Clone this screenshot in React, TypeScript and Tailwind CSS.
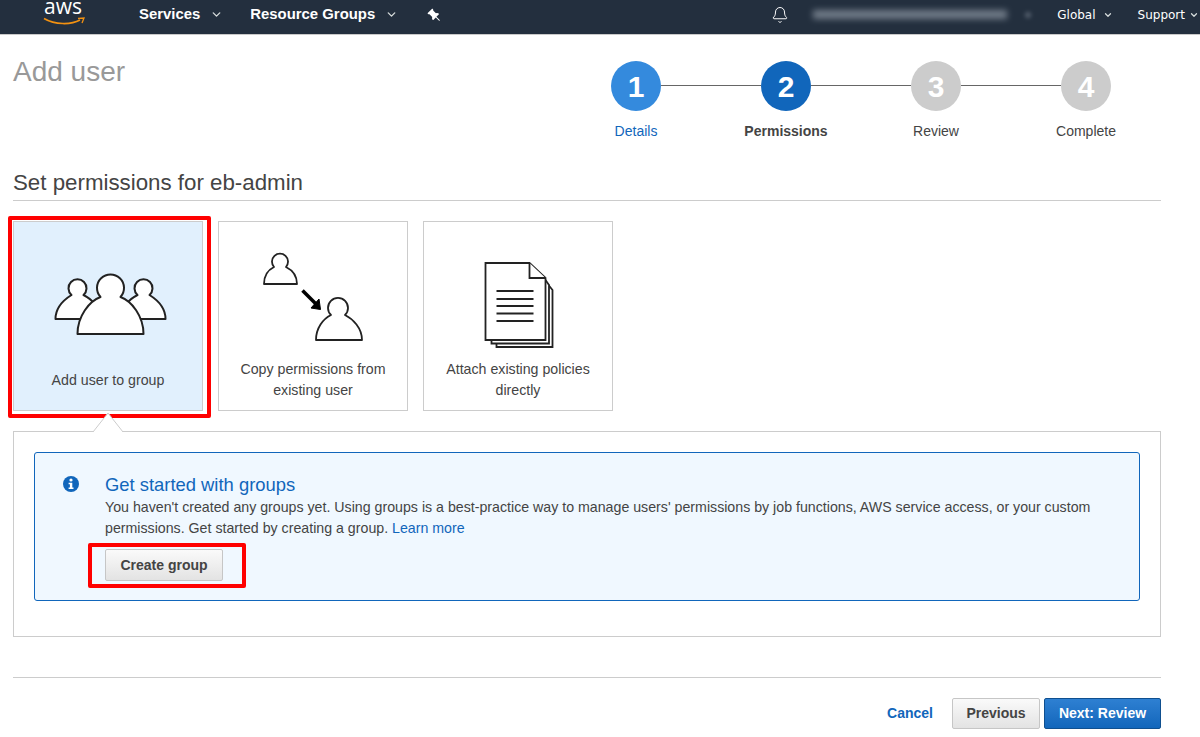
import type { ReactNode } from "react";
import { Bell, ChevronDown } from "lucide-react";
import { BsPinAngleFill } from "react-icons/bs";

const steps = [
  { n: 1, label: "Details", circle: "bg-[#348add]", text: "text-[#1166bb]" },
  { n: 2, label: "Permissions", circle: "bg-[#1166bb]", text: "text-[#444444] font-bold" },
  { n: 3, label: "Review", circle: "bg-[#cccccc]", text: "text-[#444444]" },
  { n: 4, label: "Complete", circle: "bg-[#cccccc]", text: "text-[#444444]" },
];

const GroupIcon = () => (
  <svg width="120" height="70" viewBox="48.5 270 120 70" fill="#ffffff" stroke="#222222" strokeWidth="2" strokeLinejoin="round">
    <path d="M56 319 C56 307 64 300 72 295 A9 9 0 1 1 84 295 C92 299 100 307 100 319 Z" />
    <path d="M166 319 C166 307 158 300 150 295 A9 9 0 1 0 138 295 C130 299 122 307 122 319 Z" />
    <path d="M78 334 C78 316 90 301 101 297 A13.5 13.5 0 1 1 121 297 C132 301 144 316 144 334 Z" />
  </svg>
);

const CopyIcon = () => (
  <svg width="105" height="95" viewBox="261 250 105 95" fill="#ffffff" stroke="#222222" strokeWidth="1.8" strokeLinejoin="round">
    <path d="M264 284 C264 275 268 270 274 267 A8 8 0 1 1 286 267 C292 270 297 275 297 284 Z" />
    <path d="M316 340 C316 328 323 319 331 315 A10 10 0 1 1 345 315 C353 319 362 328 362 340 Z" />
    <path d="M302.5 290.5 L316 304" stroke="#000000" strokeWidth="3.5" fill="none" />
    <path d="M320.5 309.5 L319 299 L311 308 Z" fill="#000000" stroke="#000000" strokeWidth="1" />
  </svg>
);

const DocsIcon = () => (
  <svg width="72" height="88" viewBox="482.5 261 72 88" fill="#ffffff" stroke="#222222" strokeWidth="1.8" strokeLinejoin="miter">
    <path d="M549 285 L553 290 V347 H497 V343 H549" />
    <path d="M546 280 L549.5 285 V343.5 H492 V340 H546" />
    <path d="M486 263 H530 L546 278 V340 H486 Z" />
    <path d="M530 263 V278 H546" />
    <path d="M497 291 H534 M497 299 H534 M497 306 H534 M497 313.5 H534 M497 321 H534" fill="none" />
  </svg>
);

const Card = ({ active, children }: { active?: boolean; children: ReactNode }) => (
  <div
    className={
      active
        ? "relative w-[190px] h-[190px] border border-[#cccccc] bg-[#e1f0fd] flex flex-col items-center text-[14.2px]"
        : "relative w-[190px] h-[190px] border border-[#cccccc] bg-white flex flex-col items-center text-[14.2px]"
    }
  >
    {children}
  </div>
);

export default function App() {
  return (
    <div className="w-[1200px] h-[737px] overflow-hidden bg-white text-[14px] text-[#444444] font-['Liberation_Sans',Arial,sans-serif]">
      {/* top nav */}
      <nav className="h-[35px] bg-[#232f3e] border-b border-[#c9c9c9] flex items-center text-white pb-[5px]">
        <div className="w-[139px] pl-[43px] flex flex-col items-start self-start h-[34px]">
          <span className="text-[21px] leading-[12px] ml-[1px] font-['Open_Sans',sans-serif]">aws</span>
          <svg width="42" height="9" viewBox="0 0 42 9" className="mt-[5px]">
            <path d="M1 1.5 C12 8 28 8 37 3" fill="none" stroke="#f29111" strokeWidth="1.6" />
            <path d="M35 1.5 L41 1 L39 6" fill="none" stroke="#f29111" strokeWidth="1.3" />
          </svg>
        </div>
        <span className="font-bold text-[14.9px]">Services</span>
        <ChevronDown size={13} strokeWidth={2.5} className="ml-[10px] text-[#d5dbdb]" />
        <span className="font-bold text-[14.9px] ml-[27px]">Resource Groups</span>
        <ChevronDown size={13} strokeWidth={2.5} className="ml-[10px] text-[#d5dbdb]" />
        <BsPinAngleFill size={14} className="ml-[29px] -scale-x-100" />
        <div className="ml-auto flex items-center font-['DejaVu_Sans',sans-serif] text-[12px]">
          <Bell size={18} strokeWidth={1.3} />
          <div className="ml-[24px] w-[194px] h-[9px] bg-[#8a94a0] blur-[3px] opacity-75" />
          <div className="ml-[18px] w-[6px] h-[6px] rounded-full bg-[#8a94a0] blur-[2px] opacity-50" />
          <div className="ml-[26px]">Global</div>
          <ChevronDown size={10} strokeWidth={3} className="ml-[7px] text-[#d5dbdb]" />
          <div className="ml-[25px]">Support</div>
          <ChevronDown size={10} strokeWidth={3} className="ml-[4px] mr-[1px] text-[#d5dbdb]" />
        </div>
      </nav>

      <main className="pl-[13px] pr-[39px]">
        {/* title and wizard steps */}
        <div className="flex justify-between">
          <h1 className="mt-[19px] text-[28px] leading-[36px] text-[#999999]">Add user</h1>
          <div className="w-[600px] pt-[26px]">
            <div className="flex items-center px-[50px]">
              {steps.map((s, i) => (
                <div key={s.n} className={i < 3 ? "flex items-center flex-1" : "flex items-center"}>
                  <div className={"w-[50px] h-[50px] rounded-full flex items-center justify-center text-white font-bold text-[30px] " + s.circle}>
                    {s.n}
                  </div>
                  {i < 3 && <div className="flex-1 h-px bg-[#666666] -mt-[2px]" />}
                </div>
              ))}
            </div>
            <div className="grid grid-cols-4 mt-[10px] text-center leading-[20px]">
              {steps.map((s) => (
                <div key={s.n} className={s.text}>{s.label}</div>
              ))}
            </div>
          </div>
        </div>

        <h2 className="mt-[29px] text-[22.3px] leading-[26px] text-[#444444] border-b border-[#cccccc] pb-[4px]">
          Set permissions for eb-admin
        </h2>

        {/* permission option cards */}
        <div className="flex gap-[15px] mt-[20px]">
          <Card active>
            <div className="mt-[48px]"><GroupIcon /></div>
            <div className="mt-[30px] leading-[21px]">Add user to group</div>
            <div className="absolute -left-[6px] -right-[9px] -top-[6px] -bottom-[8px] border-[4px] border-[#ff0000] rounded-[2px]" />
          </Card>
          <Card>
            <div className="mt-[28px]"><CopyIcon /></div>
            <div className="mt-[14px] leading-[21px] text-center">Copy permissions from<br />existing user</div>
          </Card>
          <Card>
            <div className="mt-[39px]"><DocsIcon /></div>
            <div className="mt-[10px] leading-[21px] text-center">Attach existing policies<br />directly</div>
          </Card>
        </div>

        {/* panel with caret */}
        <div className="relative mt-[20px] h-[206px] border border-[#cccccc] p-[20px]">
          <svg width="32" height="20" viewBox="0 0 32 20" className="absolute left-[78px] -top-[20px]">
            <path d="M1 20 L16 1 L31 20" fill="#ffffff" stroke="#cccccc" strokeWidth="1" />
          </svg>
          <div className="h-[149px] border border-[#1166bb] rounded-[3px] bg-[#f0f8ff] flex pl-[28px]">
            <svg width="16" height="16" viewBox="0 0 16 16" className="mt-[23px] shrink-0">
              <circle cx="8" cy="8" r="8" fill="#1166bb" />
              <circle cx="8" cy="4" r="1.6" fill="#ffffff" />
              <path d="M5.6 6.8 H9.3 V11.6 H10.5 V13 H5.6 V11.6 H6.9 V8.2 H5.6 Z" fill="#ffffff" />
            </svg>
            <div className="ml-[26px] pt-[21px]">
              <h3 className="text-[18.4px] leading-[22px] text-[#1166bb]">Get started with groups</h3>
              <p className="text-[14.2px] leading-[21px] mt-[1px] w-[1010px]">
                You haven't created any groups yet. Using groups is a best-practice way to manage users' permissions by job functions, AWS service access, or your custom
                permissions. Get started by creating a group. <a className="text-[#1166bb]">Learn more</a>
              </p>
              <div className="relative w-fit mt-[10px]">
                <button className="block w-[118px] h-[32px] rounded-[2px] border border-[#c6c6c6] bg-gradient-to-b from-[#fafafa] to-[#e3e3e3] font-bold text-[#444444]">
                  Create group
                </button>
                <div className="absolute -left-[17px] -right-[23px] -top-[6px] -bottom-[7px] border-[4px] border-[#ff0000] rounded-[2px]" />
              </div>
            </div>
          </div>
        </div>

        {/* footer actions */}
        <div className="mt-[40px] border-t border-[#cccccc] pt-[20px] flex justify-end items-center">
          <a className="font-bold text-[#1166bb] mr-[19px]">Cancel</a>
          <button className="w-[88px] h-[31px] rounded-[2px] border border-[#c6c6c6] bg-gradient-to-b from-[#fafafa] to-[#e3e3e3] font-bold text-[#444444]">
            Previous
          </button>
          <button className="ml-[4px] w-[117px] h-[31px] rounded-[2px] border border-[#0f4f8f] bg-gradient-to-b from-[#2e80d2] to-[#1166bb] font-bold text-white">
            Next: Review
          </button>
        </div>
      </main>
    </div>
  );
}
